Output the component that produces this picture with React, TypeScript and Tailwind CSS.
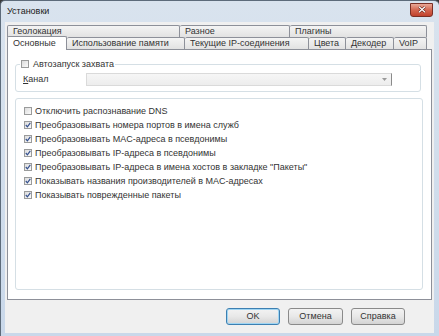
import type { ReactNode } from "react";

const font = "font-['Liberation_Sans',Arial,sans-serif]";

function Check({ checked }: { checked?: boolean }) {
  return (
    <span className="w-[8px] h-[8px] shrink-0 border border-[#9a9b9b] bg-linear-to-br from-[#dcdcdc] to-[#fbfbfb] flex items-center justify-center">
      {checked && (
        <svg width="6" height="6" viewBox="0 0 6 6">
          <path d="M0.8 3 L2.4 4.8 L5.3 0.9" fill="none" stroke="#34508e" strokeWidth="1.2" />
        </svg>
      )}
    </span>
  );
}

function Tab({ w, children, first }: { w: string; children: ReactNode; first?: boolean }) {
  return (
    <div
      className={`${w} h-full border-t border-r ${first ? "border-l" : ""} border-[#8d9099] rounded-t-[2px] bg-linear-to-b from-[#f4f4f4] to-[#e2e2e2] pl-[5px] flex items-center text-[9px] leading-none text-[#333]`}
    >
      {children}
    </div>
  );
}

function Btn({ w, children, def }: { w: string; children: ReactNode; def?: boolean }) {
  return (
    <button
      className={`${w} h-[17px] rounded-[3px] border ${def ? "border-[#3c7fb1] shadow-[inset_0_0_0_1px_#9fd5f3]" : "border-[#8a8a8a]"} bg-linear-to-b from-[#f3f3f3] via-[#e8e8e8] to-[#d3d3d3] text-[9px] leading-none text-[#333] flex items-center justify-center`}
    >
      {children}
    </button>
  );
}

const options = [
  { label: "Отключить распознавание DNS", checked: false },
  { label: "Преобразовывать номера портов в имена служб", checked: true },
  { label: "Преобразовывать MAC-адреса в псевдонимы", checked: true },
  { label: "Преобразовывать IP-адреса в псевдонимы", checked: true },
  { label: "Преобразовывать IP-адреса в имена хостов в закладке \"Пакеты\"", checked: true },
  { label: "Показывать названия производителей в MAC-адресах", checked: true },
  { label: "Показывать поврежденные пакеты", checked: true },
];

export default function App() {
  return (
    <div className={`w-[439px] h-[336px] bg-[#3a3a3a] ${font}`}>
      <div className="w-full h-full rounded-t-[5px] border-t border-l border-[#5d6b7a] bg-linear-to-b from-[#d9e3ee] to-[#c9d8ea] flex flex-col">
        {/* Заголовок */}
        <div className="h-[21px] shrink-0 flex items-center justify-between pl-[6px] pr-[6px]">
          <span className="text-[9px] text-[#1b1b1b] leading-none">Установки</span>
          <div className="w-[23px] h-[14px] -mt-[4px] rounded-b-[3px] border border-[#7a2f25] bg-linear-to-b from-[#e9a897] via-[#d46650] to-[#c0412c] flex items-center justify-center">
            <svg width="8" height="7" viewBox="0 0 8 7">
              <path d="M1 0.8 L7 6.2 M7 0.8 L1 6.2" stroke="#5a1a12" strokeWidth="2.4" />
              <path d="M1 0.8 L7 6.2 M7 0.8 L1 6.2" stroke="#ffffff" strokeWidth="1.3" />
            </svg>
          </div>
        </div>

        {/* Клиентская область */}
        <div className="ml-[4px] mr-[5px] mb-[3px] flex-1 bg-[#f0f0f0] flex flex-col px-[2px]">
          <div className="mt-[3px] flex flex-col w-[420px]">
            <div className="h-[12px] flex">
              <Tab w="w-[173px]" first>Геолокация</Tab>
              <Tab w="w-[110px]">Разное</Tab>
              <Tab w="w-[137px]">Плагины</Tab>
            </div>
            <div className="h-[12px] flex items-end">
              <div className="w-[60px] h-[14px] -mb-px relative z-10 border-t border-l border-r border-[#8d9099] rounded-t-[2px] bg-white pl-[5px] flex items-center text-[9px] leading-none text-[#333]">
                Основные
              </div>
              <Tab w="w-[118px]">Использование памяти</Tab>
              <Tab w="w-[124px]">Текущие IP-соединения</Tab>
              <Tab w="w-[37px]">Цвета</Tab>
              <Tab w="w-[48px]">Декодер</Tab>
              <Tab w="w-[33px]">VoIP</Tab>
            </div>
          </div>

          {/* Панель */}
          <div className="h-[251px] w-[425px] border border-[#8d9099] bg-white flex flex-col text-[9px] leading-none text-[#333]">
            <fieldset className="mt-[9px] ml-[7px] w-[406px] border border-[#d5dfe5] rounded-[3px] pl-[4px] pb-[5px]">
              <legend className="px-[1px] h-[10px] flex items-center gap-[4px] bg-white">
                <Check />
                <span>Автозапуск захвата</span>
              </legend>
              <div className="mt-[4px] ml-[3px] flex items-center">
                <span className="w-[63px]">
                  <span className="underline">К</span>анал
                </span>
                <div className="w-[306px] h-[13px] border border-[#dadada] border-r-[#8a8a8a] bg-linear-to-b from-[#f6f6f6] to-[#ededed] flex items-center justify-end pr-[4px]">
                  <svg width="5" height="3" viewBox="0 0 5 3">
                    <path d="M0 0 L5 0 L2.5 3 Z" fill="#9a9a9a" />
                  </svg>
                </div>
              </div>
            </fieldset>

            <div className="mt-[6px] ml-[7px] w-[408px] h-[192px] border border-[#d5dfe5] rounded-[3px] pt-[5px] pl-[8px] flex flex-col">
              {options.map((o) => (
                <div key={o.label} className="h-[14px] flex items-center gap-[3px]">
                  <Check checked={o.checked} />
                  <span>{o.label}</span>
                </div>
              ))}
            </div>
          </div>

          {/* Кнопки */}
          <div className="mt-[8px] flex justify-end gap-[8px] pr-[27px]">
            <Btn w="w-[54px]" def>
              OK
            </Btn>
            <Btn w="w-[55px]">Отмена</Btn>
            <Btn w="w-[54px]">Справка</Btn>
          </div>
        </div>
      </div>
    </div>
  );
}
